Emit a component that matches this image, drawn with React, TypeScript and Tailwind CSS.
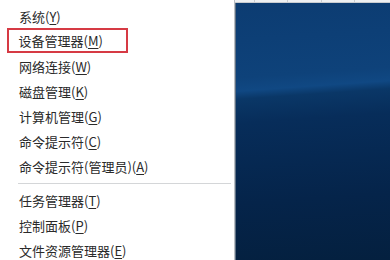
import React from "react";

type Item = { label: string; key: string };

const groupA: Item[] = [
  { label: "系统", key: "Y" },
  { label: "设备管理器", key: "M" },
  { label: "网络连接", key: "W" },
  { label: "磁盘管理", key: "K" },
  { label: "计算机管理", key: "G" },
  { label: "命令提示符", key: "C" },
  { label: "命令提示符(管理员)", key: "A" },
];

const groupB: Item[] = [
  { label: "任务管理器", key: "T" },
  { label: "控制面板", key: "P" },
  { label: "文件资源管理器", key: "E" },
];

const Label = ({ item }: { item: Item }) => (
  <span className="whitespace-nowrap">
    {item.label}(<span className="underline underline-offset-2">{item.key}</span>)
  </span>
);

const Row = ({ item, boxed }: { item: Item; boxed?: boolean }) => {
  if (boxed) {
    return (
      <div className="h-[25px] flex items-center">
        <div className="ml-[7px] w-[121px] h-[25px] border-[2.5px] border-[#d63a44] flex items-center pl-[9.5px] -mt-[2px]">
          <Label item={item} />
        </div>
      </div>
    );
  }
  return (
    <div className="h-[25px] flex items-center pl-[19px]">
      <Label item={item} />
    </div>
  );
};

export default function App() {
  return (
    <div className="w-[390px] h-[260px] flex overflow-hidden bg-white">
      {/* context menu */}
      <div
        className="w-[235px] shrink-0 bg-white border-r border-[#b9bec4] pt-[4px] text-[13px] text-[#2a2a2a]"
        style={{ fontFamily: '"Noto Sans CJK SC", "Noto Sans", sans-serif' }}
      >
        {groupA.map((it, i) => (
          <Row key={it.key} item={it} boxed={i === 1} />
        ))}
        <div className="h-[10px] flex items-center pr-[3px] pl-[18px] -mt-[1px]">
          <div className="h-px w-full bg-[#d4d6d8]" />
        </div>
        {groupB.map((it) => (
          <Row key={it.key} item={it} />
        ))}
      </div>

      {/* desktop */}
      <div className="flex-1 flex flex-col">
        <div className="h-[3px] flex bg-[#eef0f2] border-b border-[#c9ccd0]">
          <div className="w-[20px] border-r border-[#c9ccd0]" />
          <div className="w-[33px] border-r border-[#c9ccd0]" />
          <div className="w-[34px] border-r border-[#c9ccd0]" />
          <div className="w-[33px] border-r border-[#c9ccd0]" />
          <div className="flex-1" />
        </div>
        <div className="flex-1 border-l border-[#5d6f82] bg-[linear-gradient(176deg,#0c3c72_0%,#0e427a_28%,#104883_33%,#0a3767_36%,#072d5a_45%,#05244a_75%,#04203f_100%)]" />
      </div>
    </div>
  );
}
